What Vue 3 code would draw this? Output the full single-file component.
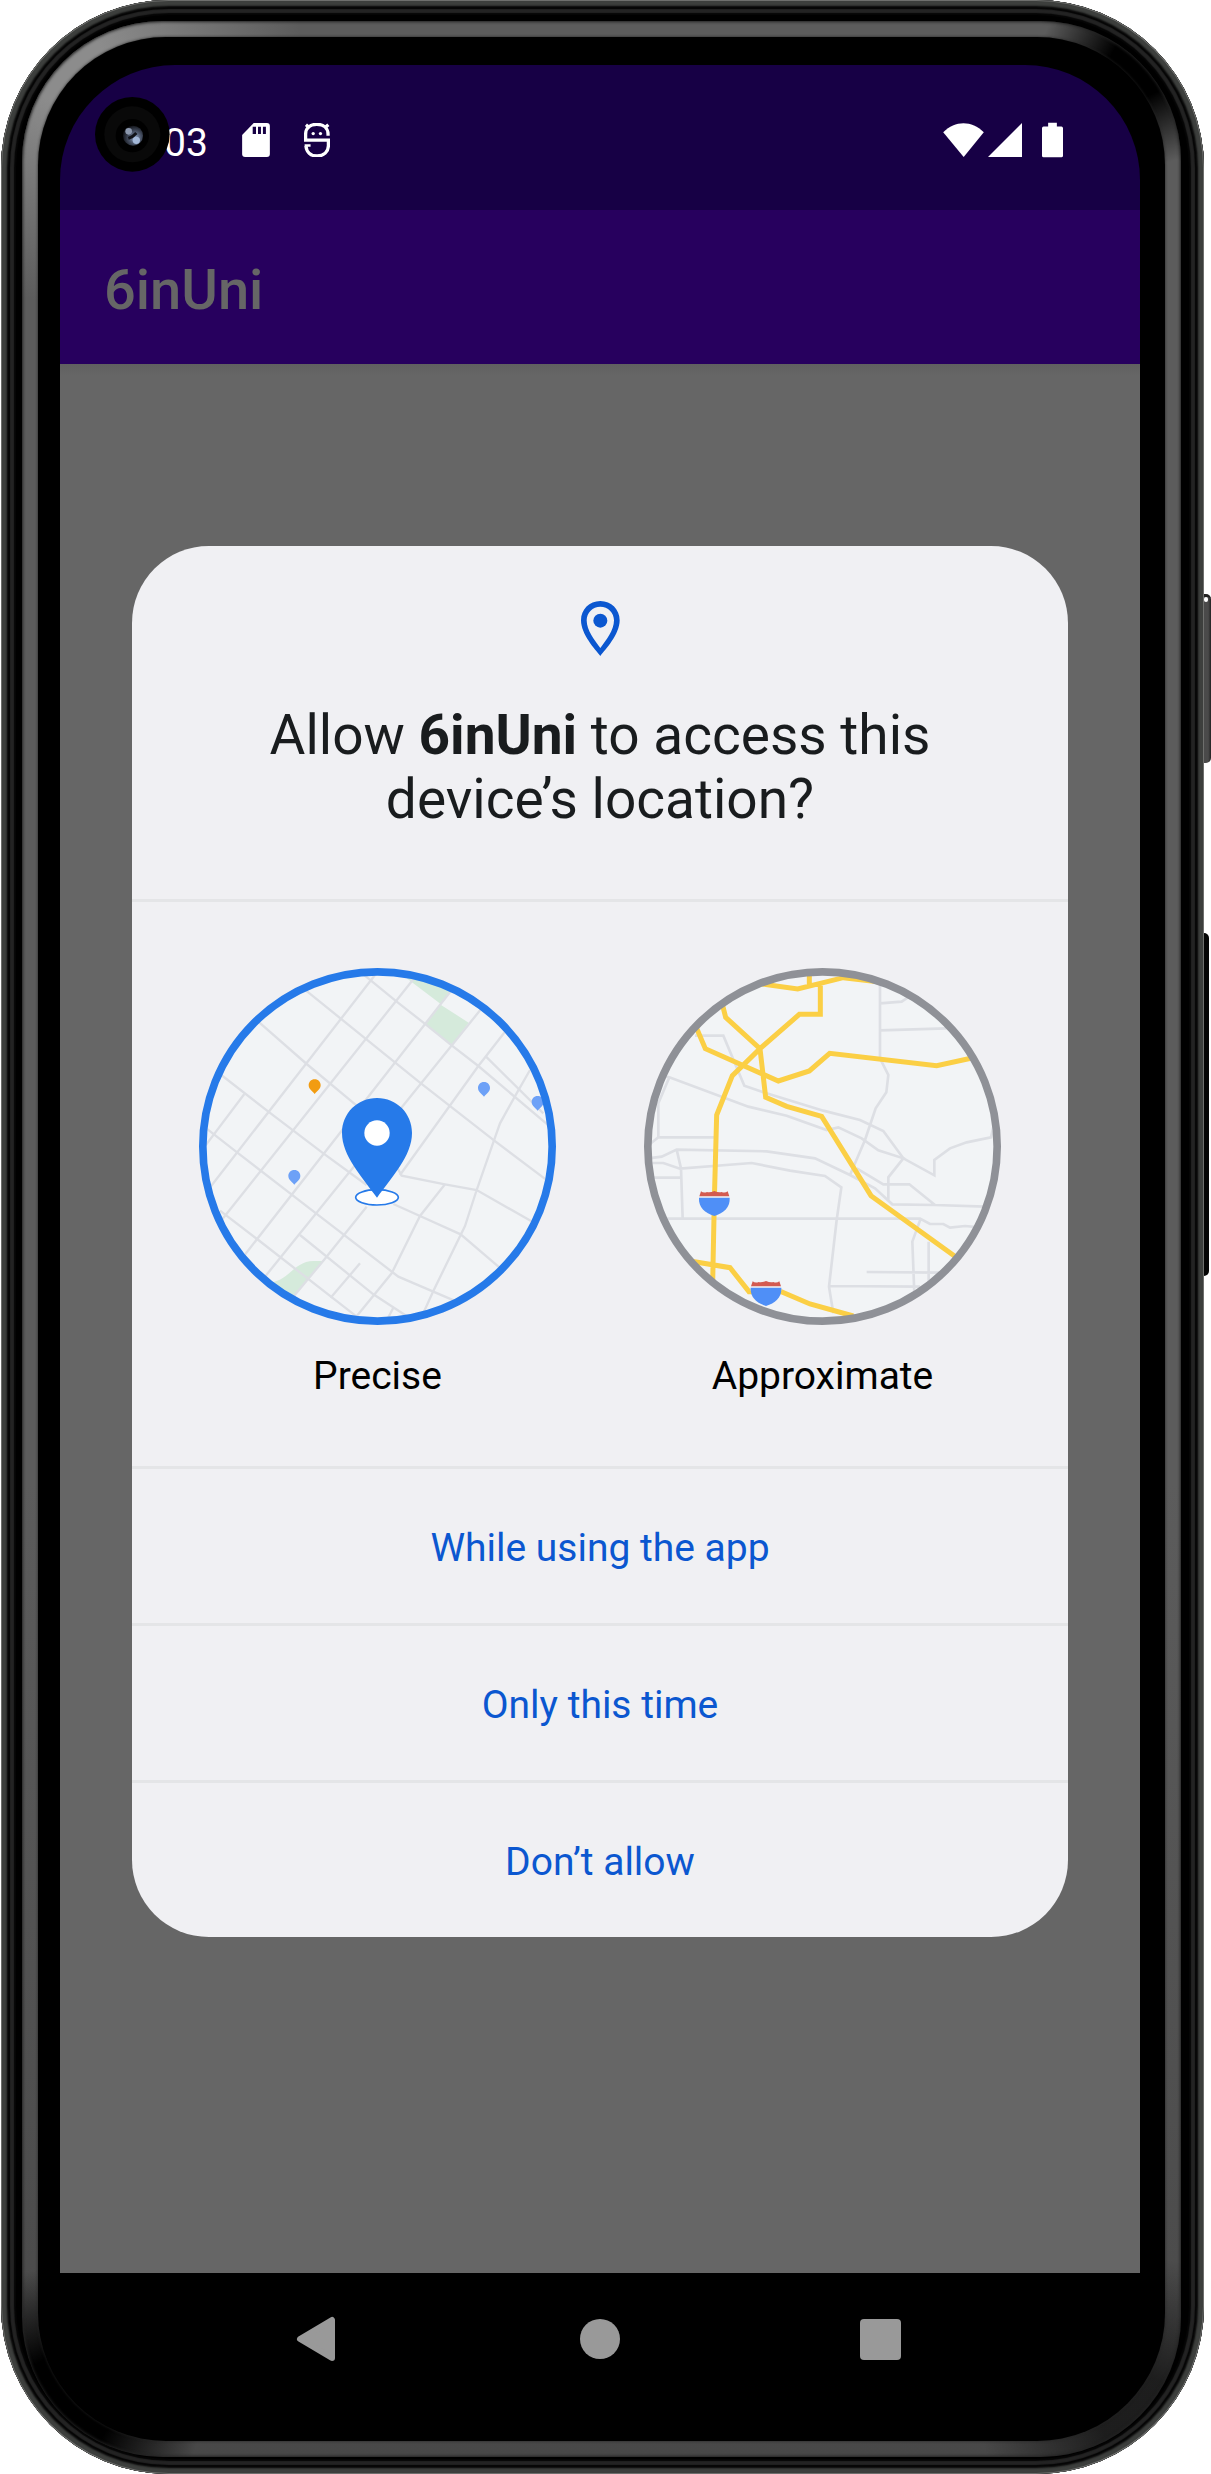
<script setup>
import { ref } from 'vue'

const accuracy = ref('precise')
const actions = ['While using the app', 'Only this time', 'Don’t allow']
</script>

<template>
  <div class="phone">
    <span class="side-key power"></span>
    <span class="side-key volume"></span>
    <div class="rim">
      <div class="glass">
        <main class="screen">
          <header class="status-bar">
            <svg class="camera" viewBox="0 0 225 225" aria-hidden="true">
              <defs>
                <radialGradient id="lens" cx="60%" cy="60%" r="60%">
                  <stop offset="0" stop-color="#8da2c4" />
                  <stop offset="0.5" stop-color="#4a5468" />
                  <stop offset="1" stop-color="#14161c" />
                </radialGradient>
              </defs>
              <circle cx="112" cy="112" r="112" fill="#000" />
              <circle cx="112" cy="112" r="84" fill="#090909" />
              <circle cx="112" cy="116" r="50" fill="#000" />
              <circle cx="114" cy="116" r="30" fill="url(#lens)" />
              <circle cx="101" cy="103" r="10" fill="#8c98ae" />
              <path d="M100 124q14-4 24-16" stroke="#101218" stroke-width="9" fill="none" />
              <circle cx="124" cy="130" r="11" fill="#a3b8d8" />
            </svg>
            <span class="clock">03</span>
            <svg class="sd" viewBox="727 369 84 103" aria-hidden="true">
              <path fill="#fff" d="M762 369h40q9 0 9 9v85q0 9-9 9h-66q-9 0-9-9v-58z" />
              <path fill="#170045" d="M759 380h10v22h-10zM775 380h9v22h-9zM790 380h9v22h-9z" />
            </svg>
            <svg class="debug" viewBox="914 369 77 103" aria-hidden="true">
              <g fill="none" stroke="#fff" stroke-width="10">
                <path d="M986 408v-5c0-19-14-30-34-30s-34 11-34 30v18h69v17c0 18-14 31-34 31-19 0-32-11-34-30" />
                <path d="M919 374l12 10M987 374l-12 10" />
                <path d="M915 437h18" stroke-width="8" />
              </g>
              <circle cx="941" cy="401" r="5" fill="#fff" />
              <circle cx="963" cy="401" r="5" fill="#fff" />
            </svg>
            <span class="spacer"></span>
            <svg class="wifi" viewBox="396 369 123 103" aria-hidden="true">
              <path fill="#fff" d="M396 397c36-36 86-37 123 0l-61 75z" />
            </svg>
            <svg class="signal" viewBox="530 370 103 103" aria-hidden="true">
              <path fill="#fff" d="M530 473L633 370v103z" />
            </svg>
            <svg class="battery" viewBox="692 366 65 107" aria-hidden="true">
              <path fill="#fff" d="M711 366h27v12h14q5 0 5 5v85q0 5-5 5h-55q-5 0-5-5v-85q0-5 5-5h14z" />
            </svg>
          </header>

          <div class="app-bar"><h1>6inUni</h1></div>

          <div class="backdrop">
            <section class="dialog" role="dialog" aria-labelledby="prompt">
              <div class="intro">
                <svg class="pin" viewBox="93 63 117 165" aria-hidden="true">
                  <path fill="#0b57d0" fill-rule="evenodd" d="M151 63c-33 0-58 25-58 58 0 42 42 87 58 107 16-20 58-65 58-107 0-33-25-58-58-58zm0 17c23 0 41 18 41 41 0 30-24 60-41 83-17-23-41-53-41-83 0-23 18-41 41-41z" />
                  <circle cx="151" cy="122" r="21" fill="#0b57d0" />
                </svg>
                <h2 id="prompt">Allow <b>6inUni</b> to access this<br />device’s location?</h2>
              </div>

              <div class="choices">
                <label class="choice">
                  <input v-model="accuracy" type="radio" name="accuracy" value="precise" />
                  <svg class="map" viewBox="57 84 1071 1071" aria-hidden="true">
                    <clipPath id="clip-precise"><circle cx="592.5" cy="619.5" r="524" /></clipPath>
                    <g clip-path="url(#clip-precise)">
                      <path fill="#f2f4f6" d="M57 84h1071v1071H57z" />
                      <path fill="#d5eadb" d="M680 115L783 193 815 150 800 90zM783 195L866 248 815 316 737 253zM270 1028C330 1020 340 965 400 963H430L340 1070z" />
                      <g fill="none" stroke="#dddfe4" stroke-width="7">
                        <path d="M70 625L193 462M80 755L585 105M125 840L700 118M190 950L815 150M255 1010L905 205M340 1070L430 962 560 800M660 705L895 378 975 275" />
                        <path d="M540 95L650 185 737 253 815 316 895 378 1110 560M370 145L485 238 720 428 942 601 1110 728M235 245L380 372 540 505M120 402L268 517 430 640 560 735M75 562L175 640 412 823 655 1010 830 1085M120 812L235 900 530 1130M360 885L580 1063 690 1135M918 350L1090 520" />
                        <path d="M650 680L665 707 795 733 890 750 1065 850M640 792L720 828 842 883 965 988M795 733L720 828 635 1000 525 1135M1050 390L1003 472 960 550 942 601 890 750 855 858 760 1053 725 1130M540 970L452 1073M640 1103L622 1138" />
                      </g>
                      <g v-for="([x, y, tint], i) in [[404, 418, '#f29c11'], [343, 690, '#6da1f7'], [912, 426, '#6da1f7'], [1073, 468, '#6da1f7']]" :key="i">
                        <path :fill="tint" :transform="`translate(${x} ${y})`" d="M0 0C-11 0-18 8-18 18-18 29-8 35 0 44 8 35 18 29 18 18 18 8 11 0 0 0z" />
                      </g>
                    </g>
                    <circle cx="592.5" cy="619.5" r="524" fill="none" stroke="#267ae9" stroke-width="23" />
                    <ellipse cx="591" cy="772" rx="64" ry="23" fill="#fff" stroke="#267ae9" stroke-width="5" />
                    <path fill="#267ae9" d="M591 474c-59 0-105 46-105 105 0 68 60 132 105 194 45-62 105-126 105-194 0-59-46-105-105-105z" />
                    <circle cx="591" cy="579" r="38" fill="#fff" />
                  </svg>
                  <span>Precise</span>
                </label>

                <label class="choice">
                  <input v-model="accuracy" type="radio" name="accuracy" value="approximate" />
                  <svg class="map" viewBox="72 84 1071 1071" aria-hidden="true">
                    <clipPath id="clip-approximate"><circle cx="607.5" cy="619.5" r="524" /></clipPath>
                    <g clip-path="url(#clip-approximate)">
                      <path fill="#f2f4f6" d="M72 84h1071v1071H72z" />
                      <g fill="none" stroke="#dddfe4" stroke-width="8">
                        <path d="M780 130V355L805 405 799 457 767 505 735 600 690 705M780 190L845 185 870 168M780 271L980 265M225 287H310L373 437 430 457 610 512 720 540 790 573 850 655 943 706V660L990 625 1040 607 1113 592 1120 560" />
                        <path d="M130 408L148 412 385 500 500 527 620 570 655 562 725 595 775 631 850 655 805 712V780M148 412L115 490V592H285M115 592L90 612M85 655L125 650 170 629 440 634 585 655 690 705 765 745 817 793 945 795 1095 800M170 629L183 685 188 835M85 669H130L180 686 395 669 510 692 615 708 664 742 650 840 627 1040 640 1120M85 713H183M130 836H900L930 852H970L990 863 1035 858 1080 862M710 685L790 733H868L945 795M902 836L877 905 883 1060M926 905V1030M740 996L960 998M627 1038L900 1040" />
                      </g>
                      <g fill="none" stroke="#fbcf45" stroke-width="15">
                        <path d="M425 132L533 147 670 113 780 126M568 100V137M601 130V223H538L420 326 337 407 290 525 283 780 278 1030M305 185L317 232 420 326 437 472 500 499 605 529 753 767 1020 960M228 260L256 326 475 423 568 393 629 340 950 377 1070 351M210 963L330 983 387 1055 484 1055 570 1092 700 1128" />
                      </g>
                      <g v-for="([x, y], i) in [[283, 754], [438, 1024]]" :key="i" :transform="`translate(${x} ${y})`">
                        <path fill="#f2f4f6" d="M-46 12H46V28H-46z" />
                        <path fill="#d35b50" d="M-40 0q8 6 18 2 10 2 22-3 12 5 22 3 10 4 18-2l5 15h-90z" />
                        <path fill="#4f8ff7" d="M-46 19H46C48 48 28 65 0 74-28 65-48 48-46 19z" />
                      </g>
                    </g>
                    <circle cx="607.5" cy="619.5" r="524" fill="none" stroke="#8f9197" stroke-width="23" />
                  </svg>
                  <span>Approximate</span>
                </label>
              </div>

              <button v-for="action in actions" :key="action" type="button" class="action">{{ action }}</button>
            </section>
          </div>

          <nav class="nav-bar">
            <button type="button" aria-label="Back">
              <svg viewBox="0 0 48 48"><path fill="#999" stroke="#999" stroke-width="6" stroke-linejoin="round" d="M37 5v38L5 24z" /></svg>
            </button>
            <button type="button" aria-label="Home">
              <svg viewBox="0 0 48 48"><circle cx="24" cy="24" r="20" fill="#999" /></svg>
            </button>
            <button type="button" aria-label="Overview">
              <svg viewBox="0 0 48 48"><rect x="3" y="4" width="41" height="41" rx="4" fill="#999" /></svg>
            </button>
          </nav>
        </main>
      </div>
    </div>
  </div>
</template>

<style>
body {
  background: #fff;
}
</style>

<style scoped>
* {
  box-sizing: border-box;
}

.phone {
  position: relative;
  margin: 0 7px 0 1px;
  padding: 21px 23px 17px 21px;
  border-radius: 168px;
  background: #000;
  box-shadow:
    inset 0 0 0 1px #6e6f6d,
    inset 0 0 2px 6px #3d3f3d,
    inset 0 0 1px 9px #050505,
    inset 0 0 1px 13px #232323,
    inset 0 0 1px 15px #060606;
  font-family: Roboto, sans-serif;
}

.side-key {
  position: absolute;
  left: 100%;
  background: #050505;
  border-radius: 0 5px 5px 0;
}

.power {
  top: 594px;
  width: 7px;
  height: 169px;
  background: linear-gradient(90deg, #4a4a4a 60%, #222);
  border-top: 3px solid #222;
}

.power::before {
  content: '';
  display: block;
  width: 4px;
  height: 5px;
  border-radius: 2px;
  background: #fff;
}

.volume {
  top: 933px;
  width: 5px;
  height: 343px;
}

.rim {
  padding: 16px;
  border-radius: 140px;
  background:
    radial-gradient(circle at calc(100% - 42px) 46px, #000 30px, transparent 100px),
    radial-gradient(circle at 40px calc(100% - 50px), #000 50px, transparent 140px),
    radial-gradient(circle at calc(100% - 40px) calc(100% - 40px), #0009 40px, transparent 160px),
    radial-gradient(circle at 40px 40px, #8c8c8c 40px, transparent 240px),
    linear-gradient(#5c5c5c 60%, #484848);
  box-shadow: inset 0 0 3px 1px #222;
}

.glass {
  padding: 28px 25px 36px 22px;
  border-radius: 128px;
  background: #000;
  box-shadow: 0 0 3px #222;
}

.screen {
  display: flex;
  flex-direction: column;
  overflow: hidden;
  border-radius: 115px;
}

.status-bar {
  position: relative;
  display: flex;
  align-items: center;
  height: 145px;
  padding: 5px 77px 0 104px;
  background: #170045;
}

.camera {
  position: absolute;
  left: 35px;
  top: 32px;
  width: 75px;
  height: 75px;
}

.clock {
  padding-top: 6px;
  color: #fff;
  font-size: 39px;
  line-height: 46px;
}

.sd {
  width: 28px;
  height: 34px;
  margin-left: 34px;
}

.debug {
  width: 26px;
  height: 34px;
  margin-left: 34px;
}

.spacer {
  flex: 1;
}

.wifi {
  width: 41px;
  height: 34px;
}

.signal {
  width: 34px;
  height: 34px;
  margin-left: 4px;
}

.battery {
  width: 21px;
  height: 36px;
  margin-left: 20px;
}

.app-bar {
  display: flex;
  align-items: center;
  height: 154px;
  padding: 6px 44px 0;
  background: #27005e;
}

h1 {
  margin: 0;
  color: #666;
  font-size: 56px;
  font-weight: 500;
  line-height: 64px;
}

.backdrop {
  padding: 182px 72px 336px;
  background: linear-gradient(#606060, #666 12px);
}

.dialog {
  display: flex;
  flex-direction: column;
  overflow: hidden;
  border-radius: 77px;
  background: #f0f0f3;
}

.intro {
  display: flex;
  flex-direction: column;
  align-items: center;
  gap: 47px;
  padding: 55px 66px 68px;
}

.pin {
  width: 39px;
  height: 55px;
}

h2 {
  margin: 0;
  color: #191c1e;
  font-size: 55px;
  font-weight: 400;
  line-height: 64px;
  text-align: center;
}

.choices {
  display: flex;
  justify-content: center;
  gap: 88px;
  padding: 66px 0 67px;
  border-top: 3px solid #e4e5e7;
}

.choice {
  position: relative;
  display: flex;
  flex-direction: column;
  align-items: center;
  gap: 28px;
  color: #000;
  font-size: 39px;
  line-height: 46px;
}

.choice input {
  position: absolute;
  inset: 0;
  margin: 0;
  opacity: 0;
}

.map {
  width: 357px;
  height: 357px;
}

.action {
  height: 157px;
  padding: 4px 0 0;
  border: 0;
  border-top: 3px solid #e4e5e7;
  background: none;
  color: #0b57d0;
  font-family: inherit;
  font-size: 39px;
  line-height: 46px;
}

.nav-bar {
  display: flex;
  justify-content: center;
  gap: 201px;
  height: 132px;
  background: #000;
}

.nav-bar button {
  display: flex;
  align-items: center;
  justify-content: center;
  width: 80px;
  padding: 0;
  border: 0;
  background: none;
}

.nav-bar svg {
  width: 48px;
  height: 48px;
}
</style>
